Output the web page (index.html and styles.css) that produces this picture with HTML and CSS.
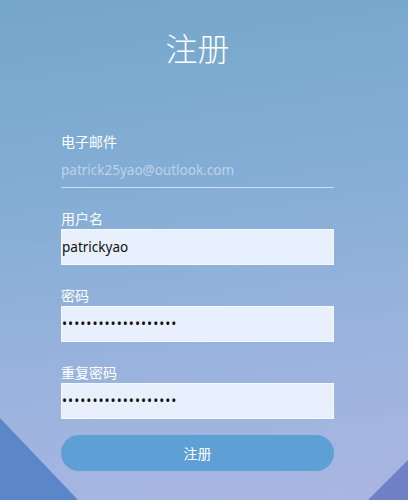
FILE: index.html
```html
<!DOCTYPE html>
<html lang="zh">
<head>
<meta charset="utf-8">
<title>注册</title>
<link rel="stylesheet" href="styles.css">
</head>
<body>
<div class="page">
  <div class="tri tri-left"></div>
  <div class="tri tri-right"></div>
  <main class="form">
    <h1 class="title">注册</h1>
    <div class="field">
      <label class="label" for="email">电子邮件</label>
      <input class="line-input" id="email" type="email" placeholder="patrick25yao@outlook.com">
    </div>
    <div class="field">
      <label class="label" for="user">用户名</label>
      <input class="box-input" id="user" type="text" value="patrickyao">
    </div>
    <div class="field">
      <label class="label" for="pw">密码</label>
      <input class="box-input pw" id="pw" type="password" value="patrickyao123456789">
    </div>
    <div class="field">
      <label class="label" for="pw2">重复密码</label>
      <input class="box-input pw" id="pw2" type="password" value="patrickyao123456789">
    </div>
    <button class="submit" type="button">注册</button>
  </main>
</div>
</body>
</html>
```

FILE: styles.css
```css
html, body {
  margin: 0;
  padding: 0;
}
body {
  font-family: "Noto Sans", "Noto Sans CJK SC", sans-serif;
}
.page {
  position: relative;
  width: 408px;
  height: 500px;
  overflow: hidden;
  background: linear-gradient(172deg, #74a6ca 0%, #86aed6 40%, #9db4df 75%, #aab5e2 100%);
}
.tri {
  position: absolute;
  bottom: 0;
}
.tri-left {
  left: 0;
  width: 78px;
  height: 82px;
  background: #5b87c9;
  clip-path: polygon(0 0, 100% 100%, 0 100%);
}
.tri-right {
  right: 0;
  width: 40px;
  height: 40px;
  background: #6f80c6;
  clip-path: polygon(100% 0, 100% 100%, 0 100%);
}
.form {
  position: relative;
  width: 273px;
  margin-left: 61px;
  padding-top: 23px;
  display: flex;
  flex-direction: column;
}
.title {
  margin: 0 0 60px;
  font-family: "Noto Sans CJK SC", sans-serif;
  font-weight: 300;
  font-size: 32px;
  line-height: 48px;
  text-align: center;
  color: #ffffff;
}
.field {
  display: flex;
  flex-direction: column;
  margin-bottom: 20px;
}
.label {
  font-family: "Noto Sans CJK SC", sans-serif;
  font-size: 14px;
  line-height: 20px;
  color: #ffffff;
  margin-bottom: 1px;
}
.line-input {
  box-sizing: border-box;
  height: 36px;
  margin: 0;
  padding: 0;
  border: none;
  border-bottom: 1px solid rgba(255, 255, 255, 0.6);
  background: transparent;
  font-family: "Noto Sans", sans-serif;
  font-size: 13.5px;
  color: #ffffff;
  outline: none;
}
.line-input::placeholder {
  color: #bdd3e9;
}
.box-input {
  box-sizing: border-box;
  height: 36px;
  margin: 0;
  padding: 0;
  border: 1px solid #f4f8ff;
  background: #e8f0fe;
  font-family: "Noto Sans", sans-serif;
  font-size: 13.5px;
  color: #111111;
  outline: none;
}
.pw {
  letter-spacing: 1px;
}
.submit {
  margin-top: -4px;
  height: 36px;
  border: none;
  border-radius: 18px;
  background: #5e9fd5;
  color: #ffffff;
  font-family: "Noto Sans CJK SC", sans-serif;
  font-size: 14px;
  padding: 0;
}
```
